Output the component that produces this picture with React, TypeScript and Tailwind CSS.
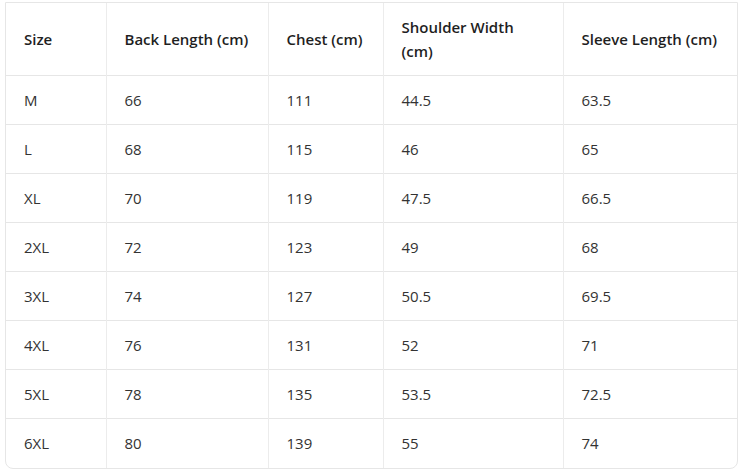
const headers = ["Size", "Back Length (cm)", "Chest (cm)", "Shoulder Width (cm)", "Sleeve Length (cm)"];

const rows = [
    ["M", "66", "111", "44.5", "63.5"],
    ["L", "68", "115", "46", "65"],
    ["XL", "70", "119", "47.5", "66.5"],
    ["2XL", "72", "123", "49", "68"],
    ["3XL", "74", "127", "50.5", "69.5"],
    ["4XL", "76", "131", "52", "71"],
    ["5XL", "78", "135", "53.5", "72.5"],
    ["6XL", "80", "139", "55", "74"],
];

const widths = ["w-[100px]", "w-[162px]", "w-[115px]", "w-[180px]", "w-[176px]"];

export default function App() {
    return (
        <div className="min-h-screen bg-white pt-[2px] pl-[5px]" style={{ fontFamily: '"Open Sans", "Noto Sans", sans-serif' }}>
            <div className="w-[733px] overflow-hidden rounded-b-lg border border-[#e6e6e6]">
                <table className="w-full table-fixed border-collapse text-[15px] leading-[24px] text-[#333333]">
                    <colgroup>
                        {widths.map((w, i) => <col key={i} className={w} />)}
                    </colgroup>
                    <thead>
                        <tr className="border-b border-[#e6e6e6]">
                            {headers.map((h, i) => (
                                <th
                                    key={h}
                                    className={`h-[72px] pl-[18px] pr-[14px] py-3 text-left align-middle font-semibold text-[#1f1f1f] ${i > 0 ? "border-l border-[#ececec]" : ""}`}
                                >
                                    {h}
                                </th>
                            ))}
                        </tr>
                    </thead>
                    <tbody>
                        {rows.map((r, ri) => (
                            <tr key={r[0]} className={ri < rows.length - 1 ? "border-b border-[#e6e6e6]" : ""}>
                                {r.map((c, i) => (
                                    <td
                                        key={i}
                                        className={`h-[49px] px-[18px] py-3 align-middle ${i > 0 ? "border-l border-[#ececec]" : ""}`}
                                    >
                                        {c}
                                    </td>
                                ))}
                            </tr>
                        ))}
                    </tbody>
                </table>
            </div>
        </div>
    );
}
